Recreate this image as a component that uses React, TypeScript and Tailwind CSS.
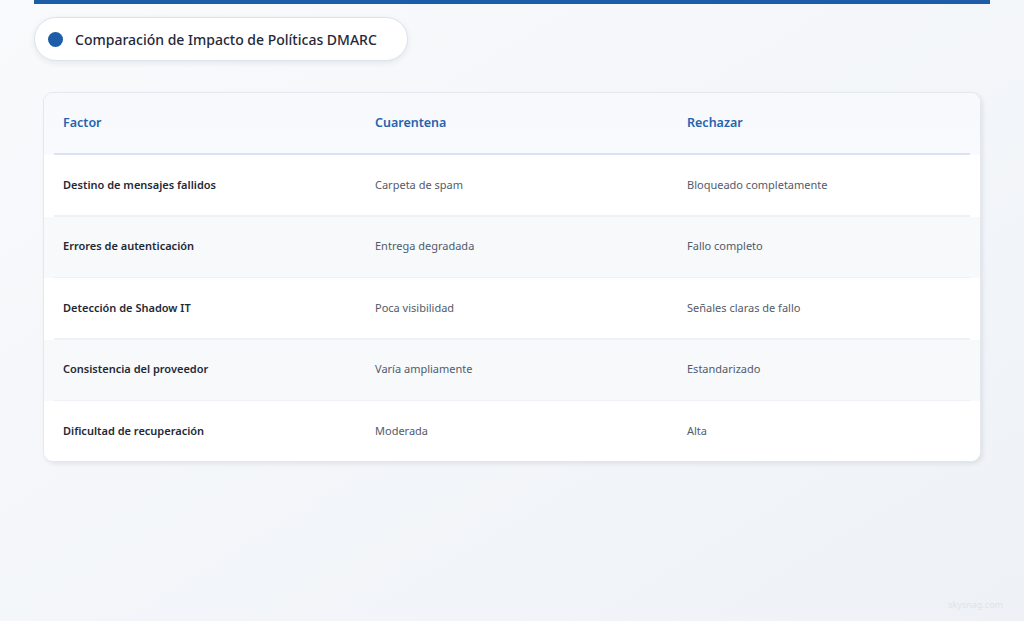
import React from "react";

const rows = [
  { factor: "Destino de mensajes fallidos", quarantine: "Carpeta de spam", reject: "Bloqueado completamente" },
  { factor: "Errores de autenticación", quarantine: "Entrega degradada", reject: "Fallo completo" },
  { factor: "Detección de Shadow IT", quarantine: "Poca visibilidad", reject: "Señales claras de fallo" },
  { factor: "Consistencia del proveedor", quarantine: "Varía ampliamente", reject: "Estandarizado" },
  { factor: "Dificultad de recuperación", quarantine: "Moderada", reject: "Alta" },
];

const App = () => {
  return (
    <div
      className="relative min-h-[621px] w-full bg-gradient-to-br from-[#f9fafc] to-[#eef2f7] text-[#1f2937]"
      style={{ fontFamily: '"Noto Sans", "Open Sans", sans-serif' }}
    >
      <div className="mx-[34px]">
        <div className="h-[4px] bg-[#1d5ca6]" />

        <div className="mt-[13px] inline-flex h-[44px] items-center gap-[12px] rounded-full border border-[#dde3ec] bg-white pl-[13px] pr-[30px] shadow-[0_2px_6px_rgba(15,23,42,0.08)]">
          <span className="h-[15px] w-[15px] rounded-full bg-[#1d5ca6]" />
          <span className="text-[14px] font-medium text-[#1f2937]">Comparación de Impacto de Políticas DMARC</span>
        </div>

        <div className="mx-[9px] mt-[31px] overflow-hidden rounded-[10px] border border-[#e3e8ef] bg-white shadow-[2px_2px_4px_rgba(15,23,42,0.08)]">
          <div className="bg-gradient-to-b from-[#f7f9fc] to-[#f8fafd]">
            <div className="grid h-[60px] grid-cols-3 items-center text-[12.5px] font-semibold text-[#2563ae]">
              <div className="px-[19px]">Factor</div>
              <div className="px-[19px]">Cuarentena</div>
              <div className="px-[19px]">Rechazar</div>
            </div>
            <div className="mx-[10px] h-[2px] bg-[#dbe3ee]" />
          </div>

          {rows.map((row, i) => (
            <div key={row.factor} className={i % 2 === 1 ? "bg-[#f7f9fb]" : "bg-white"}>
              <div className="grid h-[60px] grid-cols-3 items-center text-[11px]">
                <div className="px-[19px] font-semibold text-[#1f2937]">{row.factor}</div>
                <div className="px-[19px] text-[#525b6b]">{row.quarantine}</div>
                <div className="px-[19px] text-[#525b6b]">{row.reject}</div>
              </div>
              {i < rows.length - 1 && <div className="mx-[10px] h-[1.5px] bg-[#eef1f5]" />}
            </div>
          ))}
        </div>
      </div>

      <div className="absolute bottom-[10px] right-[21px] text-[9px] text-[#dfe3ea]">skysnag.com</div>
    </div>
  );
};

export default App;
